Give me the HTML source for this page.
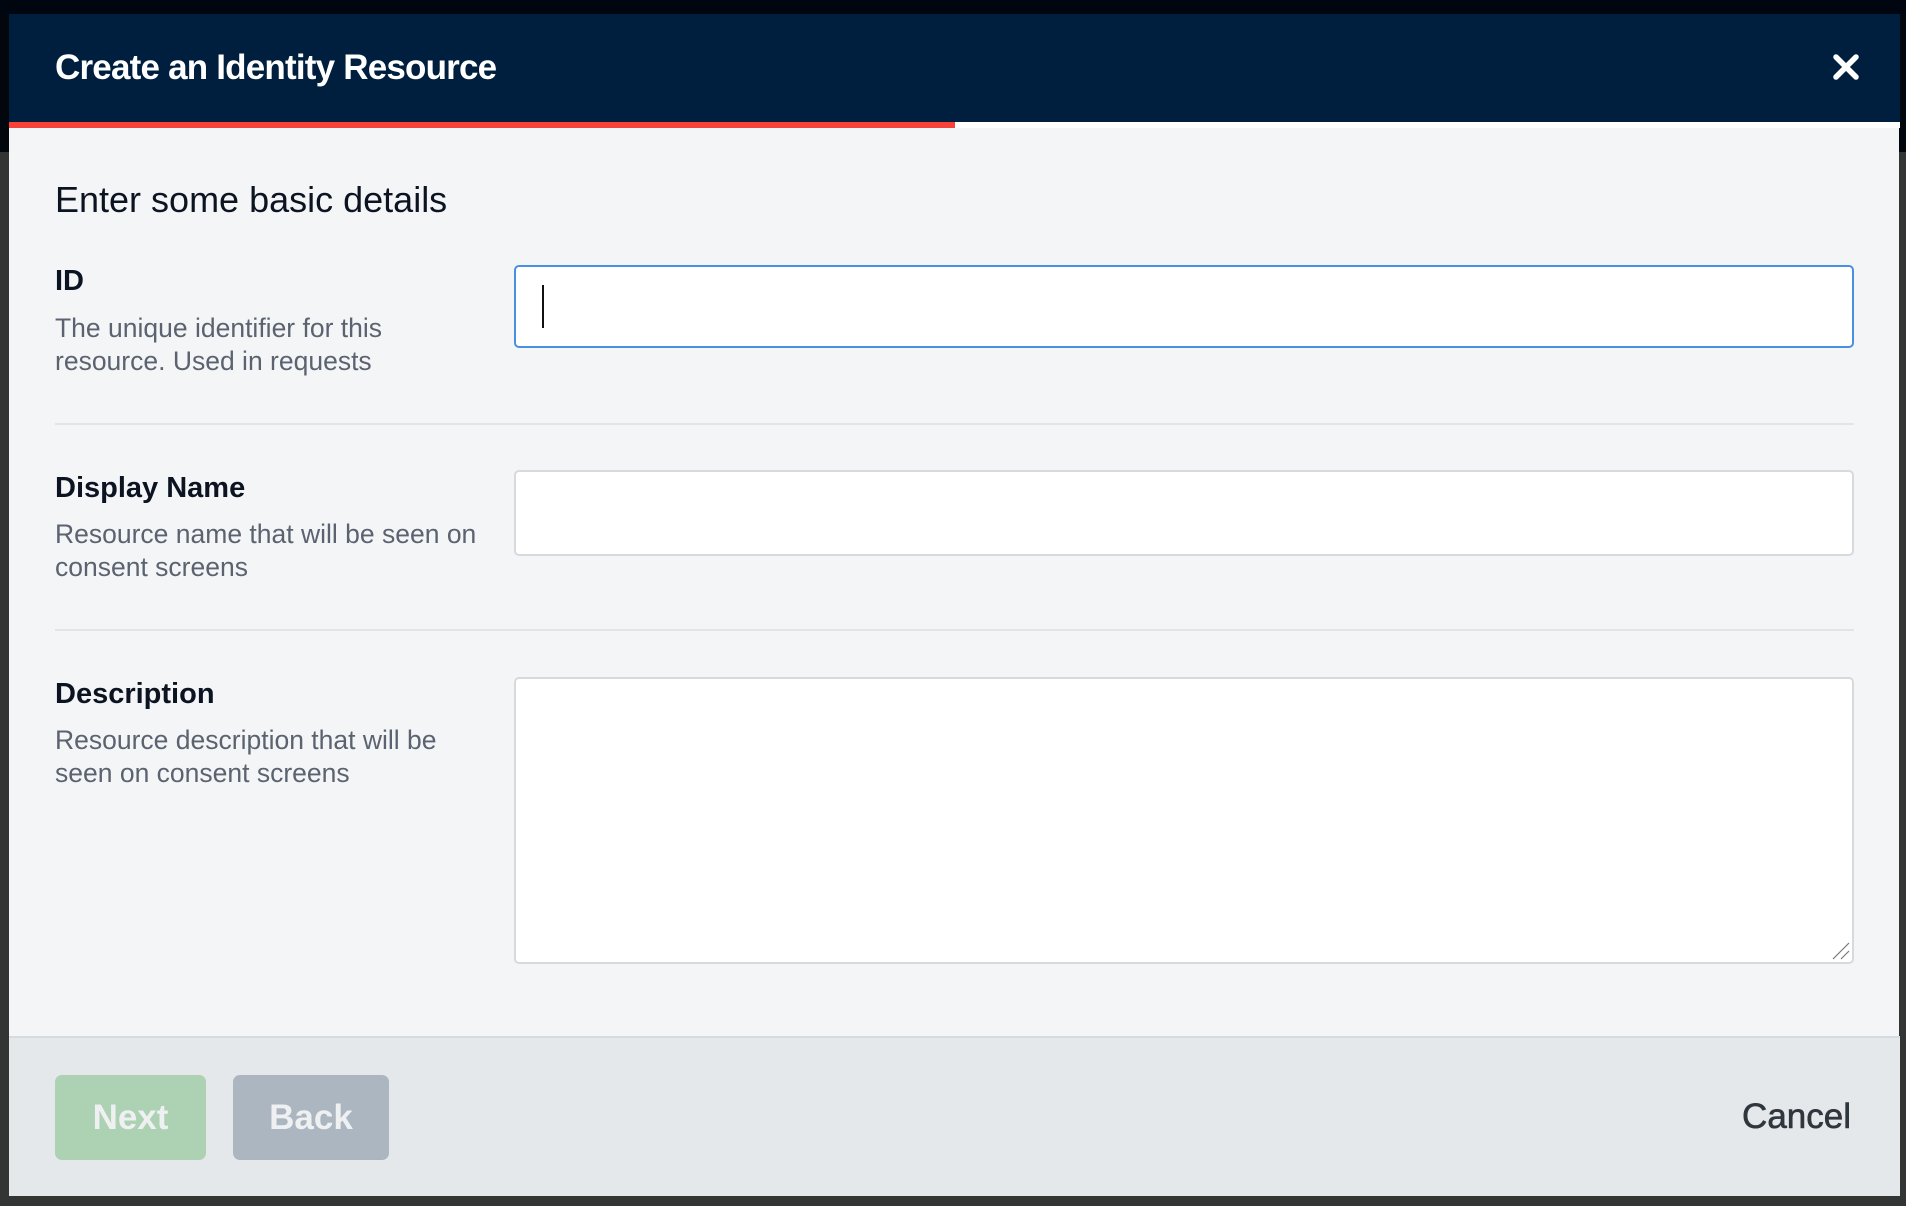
<!DOCTYPE html>
<html><head><meta charset="utf-8"><style>
*{margin:0;padding:0;box-sizing:border-box}
body{width:1906px;height:1206px;background:#333434;position:relative;overflow:hidden;font-family:"Liberation Sans",Arial,sans-serif}
.abs{position:absolute}
.lbl{position:absolute;left:55px;font-size:29px;font-weight:bold;color:#0c1422}
.desc{position:absolute;left:55px;font-size:26.5px;line-height:33px;color:#5c6370;width:420px}
.inp{position:absolute;left:514px;width:1340px;background:#fff;border:2px solid #d6dadf;border-radius:5px}
.hr{position:absolute;left:55px;width:1799px;height:2px;background:#e2e5e8}
</style></head><body>
<div class="abs" style="left:0;top:0;width:1906px;height:14px;background:#00060f"></div>
<div class="abs" style="left:0;top:14px;width:10px;height:138px;background:#02060d"></div>
<div class="abs" style="left:1899px;top:14px;width:7px;height:138px;background:#02060d"></div>
<div class="abs" style="left:9px;top:14px;width:1891px;height:108px;background:#001f3e"></div>
<div class="abs" style="left:55px;top:44px;font-size:35px;font-weight:bold;color:#fff;line-height:48px;letter-spacing:-0.8px">Create an Identity Resource</div>
<svg class="abs" style="left:1832px;top:53px" width="28" height="28" viewBox="0 0 28 28"><path d="M4 4L24 24M24 4L4 24" stroke="#fff" stroke-width="5.5" stroke-linecap="round"/></svg>
<div class="abs" style="left:9px;top:122px;width:1891px;height:6px;background:#fff"></div>
<div class="abs" style="left:9px;top:122px;width:946px;height:6px;background:#f7423a"></div>
<div class="abs" style="left:9px;top:128px;width:1890px;height:908px;background:#f4f5f7"></div>
<div class="abs" style="left:55px;top:178px;font-size:36px;color:#0c1422;line-height:44px">Enter some basic details</div>

<div class="lbl" style="top:265px">ID</div>
<div class="desc" style="top:312px">The unique identifier for this resource. Used in requests</div>
<div class="inp" style="top:265px;height:83px;border-color:#4a90e2"></div>
<div class="abs" style="left:542px;top:285px;width:2px;height:43px;background:#111"></div>
<div class="hr" style="top:423px"></div>

<div class="lbl" style="top:472px">Display Name</div>
<div class="desc" style="top:518px;width:495px">Resource name that will be seen on consent screens</div>
<div class="inp" style="top:470px;height:86px"></div>
<div class="hr" style="top:629px"></div>

<div class="lbl" style="top:678px">Description</div>
<div class="desc" style="top:724px;width:440px">Resource description that will be seen on consent screens</div>
<div class="inp" style="top:677px;height:287px"></div>
<svg class="abs" style="left:1832px;top:942px" width="18" height="18"><path d="M1 17L17 1M9 17L17 9" stroke="#777" stroke-width="1.2"/></svg>

<div class="abs" style="left:9px;top:1036px;width:1891px;height:160px;background:#e4e8eb;border-top:2px solid #d6dbe0"></div>
<div class="abs" style="left:55px;top:1075px;width:151px;height:85px;background:#add1b3;border-radius:7px;color:#eef0f2;font-size:35px;font-weight:bold;text-align:center;line-height:85px">Next</div>
<div class="abs" style="left:233px;top:1075px;width:156px;height:85px;background:#acb6c1;border-radius:7px;color:#eef0f2;font-size:35px;font-weight:bold;text-align:center;line-height:85px">Back</div>
<div class="abs" style="left:1680px;top:1094px;width:171px;text-align:right;font-size:35px;color:#30363d;line-height:46px;-webkit-text-stroke:0.6px #30363d">Cancel</div>
</body></html>
